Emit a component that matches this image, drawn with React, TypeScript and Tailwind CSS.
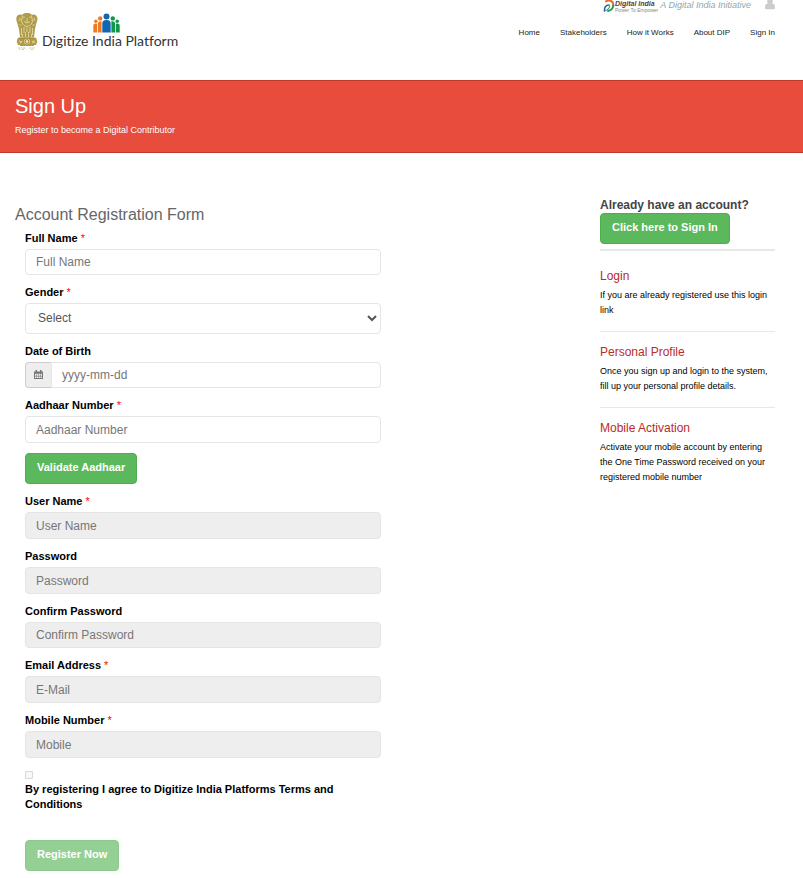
import type { ReactNode } from "react";

const navItems = ["Home", "Stakeholders", "How it Works", "About DIP", "Sign In"];

const helpItems = [
  { title: "Login", text: "If you are already registered use this login link" },
  {
    title: "Personal Profile",
    text: "Once you sign up and login to the system, fill up your personal profile details.",
  },
  {
    title: "Mobile Activation",
    text: "Activate your mobile account by entering the One Time Password received on your registered mobile number",
  },
];

const inputClass =
  "block w-full rounded border border-[#e5e5e5] px-2.5 text-xs text-[#555] placeholder:text-[#777] disabled:bg-[#eee]";

const buttonClass =
  "block h-[31px] rounded border border-[#4cae4c] bg-[#5cb85c] px-[11px] pb-[3px] text-[11px] font-bold text-white disabled:opacity-65";

function Emblem() {
  return (
    <svg width="24" height="38" viewBox="0 0 24 38" aria-hidden="true">
      <g fill="#b09c48">
        <path d="M8 1c2-1.400 6-1.400 8 0l1 1c2-1 4.500 0 5 2 .8 2 .5 4-.6 6l-1.400 6-1 8H5L4 16 2.200 10C1 7 1 4 2.500 2.500 4 1.300 6 1.500 7 2z" />
        <path d="M2.500 25.500c2-1.500 17-1.500 19 0l.8 3.500-1.500 3H3.200L1.700 29z" />
        <path d="M5 31.500h14v1.500H5z" />
      </g>
      <g fill="none" stroke="#efe8c4" strokeWidth=".7">
        <path d="M8 4.500c1-1 2 0 2 0M14 4.500c1-1 2 0 2 0M9 8.500l3 1.500 3-1.500M12 5v4M4 5l1.500 1L4 8M20 5l-1.500 1L20 8M7.500 2.500L6.500 9l2 3M16.500 2.500l1 6.500-2 3M4.500 11l2 2M19.500 11l-2 2M9 12.500l3 1 3-1" />
        <path d="M6.500 15v7M9 14v6M12 14.500V19M15 14v6M17.500 15v7M10.500 19v5M13.500 19v5M7.500 21v3M16.500 21v3" />
        <path d="M4 28l3 1M5 30l2-1.500M17 28.500l3-.5M17 30l3-1" />
      </g>
      <path d="M3.500 25h17" stroke="#8d7a2c" strokeWidth=".8" />
      <circle cx="12" cy="28.500" r="2.800" fill="#efe8c4" />
      <circle cx="12" cy="28.500" r="1.900" fill="none" stroke="#927c20" strokeWidth=".9" />
      <path
        d="M3 35h8M14 35h6M4 36.500h1M7 36.500h2M16 36.500h2"
        stroke="#d6cb96"
        strokeWidth="1"
        strokeDasharray="2 .5"
      />
    </svg>
  );
}

function PeopleIcon() {
  return (
    <svg width="27" height="20" viewBox="0 0 27 20" aria-hidden="true">
      <g fill="#f07a22">
        <circle cx="2.800" cy="8.200" r="1.700" />
        <path d="M.3 19.500v-6.500c0-1.800 1-2.500 2.400-2.500.8 0 1.300.3 1.300.8v8.200z" />
        <circle cx="7.200" cy="5.400" r="2.200" />
        <path d="M4.800 19.500v-8.500c0-2 1.200-2.800 3-2.800h.8v11.300z" />
      </g>
      <g fill="#109648">
        <circle cx="24.200" cy="8.200" r="1.700" />
        <path d="M26.700 19.500v-6.500c0-1.800-1-2.500-2.400-2.500-.8 0-1.300.3-1.300.8v8.200z" />
        <circle cx="19.800" cy="5.400" r="2.200" />
        <path d="M22.200 19.500v-8.500c0-2-1.200-2.800-3-2.800h-.8v11.300z" />
      </g>
      <g fill="#1267b1">
        <circle cx="13.500" cy="3.400" r="3" />
        <path d="M9.300 19.500V10.500c0-2.500 1.500-3.500 4.200-3.500s4.200 1 4.200 3.500v9z" />
      </g>
    </svg>
  );
}

function DigitalIndiaMark() {
  return (
    <svg width="12" height="13" viewBox="0 0 12 13" aria-hidden="true">
      <g fill="none" strokeLinecap="round">
        <path d="M3 1.300C6.500-.6 10.800 1 10.300 5.500" stroke="#e8702a" strokeWidth="2" />
        <path d="M10.300 5.500c-.3 3-3 5-5.300 5.600" stroke="#2c9a57" strokeWidth="2" />
        <path d="M1.500 11c-.3-3.500 1-5.500 4-6" stroke="#2569a8" strokeWidth="1.700" />
        <path d="M5.500 5c2.200.5 1 4-2.500 5.500" stroke="#49a874" strokeWidth="1.300" />
      </g>
    </svg>
  );
}

function UserIcon() {
  return (
    <svg width="10" height="10" viewBox="0 0 10 10" fill="#ccc" aria-hidden="true">
      <circle cx="5" cy="1.500" r="2.800" />
      <path d="M2.400 3.600h5.200C9.200 4 10 5.200 10 7.400 10 8.800 9.300 9.200 8.500 9.200h-7C.7 9.200 0 8.800 0 7.400 0 5.200.8 4 2.400 3.600z" />
    </svg>
  );
}

function CalendarIcon() {
  return (
    <svg width="9" height="10" viewBox="0 0 9 10" aria-hidden="true">
      <path d="M0 1.500h9V9H0z" fill="#777" />
      <path d="M1.500 0h1.500v2H1.500zM6 0h1.500v2H6z" fill="#777" />
      <path
        d="M1 3.700h1.500v1.200H1zM3 3.700h1.300v1.200H3zM4.800 3.700h1.300v1.200H4.800zM6.600 3.700H8v1.200H6.600zM1 5.300h1.500v1.200H1zM3 5.300h1.300v1.200H3zM4.800 5.300h1.300v1.200H4.800zM6.600 5.300H8v1.200H6.600zM1 6.900h1.500v1.200H1zM3 6.900h1.300v1.200H3zM4.800 6.900h1.300v1.200H4.800zM6.600 6.900H8v1.200H6.600z"
        fill="#eee"
      />
    </svg>
  );
}

type FieldProps = {
  id: string;
  label: string;
  required?: boolean;
  children: ReactNode;
};

function Field({ id, label, required, children }: FieldProps) {
  return (
    <div>
      <label htmlFor={id} className="mb-[3px] block text-[11px] leading-[15px] font-bold">
        {label}
        {required ? <span className="font-normal text-[#f00]"> *</span> : null}
      </label>
      {children}
    </div>
  );
}

function Header() {
  return (
    <header className="flex h-20 items-start justify-between pr-7 pl-[15px]">
      <a href="#home" className="mt-[13px] flex items-start">
        <Emblem />
        <span className="flex flex-col items-center">
          <span className="ml-[-4px] h-5">
            <PeopleIcon />
          </span>
          <span className="ml-[3px] -mt-0.5 font-['Lato'] text-[14px] leading-[20px] whitespace-nowrap text-[#333] [font-variant-ligatures:none]">
            Digitize India Platform
          </span>
        </span>
      </a>
      <div className="flex flex-col items-end">
        <div className="flex h-3 items-start">
          <DigitalIndiaMark />
          <span className="flex flex-col">
            <span className="text-[7px] leading-[8px] font-bold text-[#444] italic">Digital India</span>
            <span className="text-[5px] leading-[4px] text-[#888]">Power To Empower</span>
          </span>
          <span className="ml-0.5 text-[9px] leading-[10px] text-[#8aa9b0] italic">A Digital India Initiative</span>
          <a href="#account" aria-label="Account" className="ml-[14px]">
            <UserIcon />
          </a>
        </div>
        <nav className="mt-[15px] flex gap-5 text-[8px] leading-[12px] text-[#222]">
          {navItems.map((item) => (
            <a key={item} href="#nav">
              {item}
            </a>
          ))}
        </nav>
      </div>
    </header>
  );
}

function RegistrationForm() {
  return (
    <form className="mt-1.5 ml-2.5 flex max-w-[356px] flex-col gap-2.5" onSubmit={(e) => e.preventDefault()}>
      <Field id="fullName" label="Full Name" required>
        <input id="fullName" type="text" placeholder="Full Name" className={`${inputClass} h-[26px]`} />
      </Field>
      <Field id="gender" label="Gender" required>
        <select
          id="gender"
          className="block h-[31px] w-full rounded border border-[#e5e5e5] bg-white pb-0.5 pl-2 text-xs text-[#555]"
        >
          <option>Select</option>
          <option>Female</option>
          <option>Male</option>
        </select>
      </Field>
      <Field id="dob" label="Date of Birth">
        <div className="flex">
          <span className="flex w-[26px] shrink-0 items-center justify-center rounded-l border border-r-0 border-[#ccc] bg-[#eee]">
            <CalendarIcon />
          </span>
          <input id="dob" type="text" placeholder="yyyy-mm-dd" className={`${inputClass} h-[26px] rounded-l-none`} />
        </div>
      </Field>
      <Field id="aadhaar" label="Aadhaar Number" required>
        <input id="aadhaar" type="text" placeholder="Aadhaar Number" className={`${inputClass} h-[27px]`} />
      </Field>
      <button type="button" className={`${buttonClass} self-start`}>
        Validate Aadhaar
      </button>
      <Field id="userName" label="User Name" required>
        <input id="userName" type="text" placeholder="User Name" disabled className={`${inputClass} h-[27px]`} />
      </Field>
      <Field id="password" label="Password">
        <input id="password" type="password" placeholder="Password" disabled className={`${inputClass} h-[27px]`} />
      </Field>
      <Field id="confirm" label="Confirm Password">
        <input
          id="confirm"
          type="password"
          placeholder="Confirm Password"
          disabled
          className={`${inputClass} h-[26px]`}
        />
      </Field>
      <Field id="email" label="Email Address" required>
        <input id="email" type="email" placeholder="E-Mail" disabled className={`${inputClass} h-[27px]`} />
      </Field>
      <Field id="mobile" label="Mobile Number" required>
        <input id="mobile" type="tel" placeholder="Mobile" disabled className={`${inputClass} h-[27px]`} />
      </Field>
      <div className="mt-[3px]">
        <input
          id="terms"
          type="checkbox"
          disabled
          className="block size-2 appearance-none rounded-[1px] border border-[#d8d8d8] bg-[#f8f8f8]"
        />
        <label htmlFor="terms" className="mt-[3px] block text-[11px] leading-[15px] font-bold">
          By registering I agree to Digitize India Platforms Terms and Conditions
        </label>
      </div>
      <button type="submit" disabled className={`${buttonClass} mt-[18px] self-start`}>
        Register Now
      </button>
    </form>
  );
}

function Sidebar() {
  return (
    <aside className="w-[175px] shrink-0">
      <p className="text-xs leading-[15px] font-bold text-[#444]">Already have an account?</p>
      <button type="button" className={buttonClass}>
        Click here to Sign In
      </button>
      <hr className="my-[5px] border-t-2 border-[#e8e8e8]" />
      {helpItems.map((item) => (
        <section key={item.title} className="border-b border-[#e8e8e8] pt-3 pb-[13px] last:border-b-0">
          <h3 className="mb-1 text-xs leading-4 text-[#b92c28]">{item.title}</h3>
          <p className="text-[9px] leading-[15px]">{item.text}</p>
        </section>
      ))}
    </aside>
  );
}

export default function App() {
  return (
    <div className="bg-white font-['Liberation_Sans',Arial,sans-serif] text-black">
      <Header />
      <div className="border-y border-[#c0392b] bg-[#e74c3c] px-[15px] pt-[13px] pb-3.5 text-white">
        <h1 className="text-xl leading-6">Sign Up</h1>
        <p className="mt-[5px] text-[9px] leading-[15px]">Register to become a Digital Contributor</p>
      </div>
      <main className="flex items-start justify-between gap-5 pt-[45px] pr-7 pb-[7px] pl-[15px]">
        <div className="mt-[7px] min-w-0 flex-1">
          <h2 className="text-base leading-5 text-[#666]">Account Registration Form</h2>
          <RegistrationForm />
        </div>
        <Sidebar />
      </main>
    </div>
  );
}
